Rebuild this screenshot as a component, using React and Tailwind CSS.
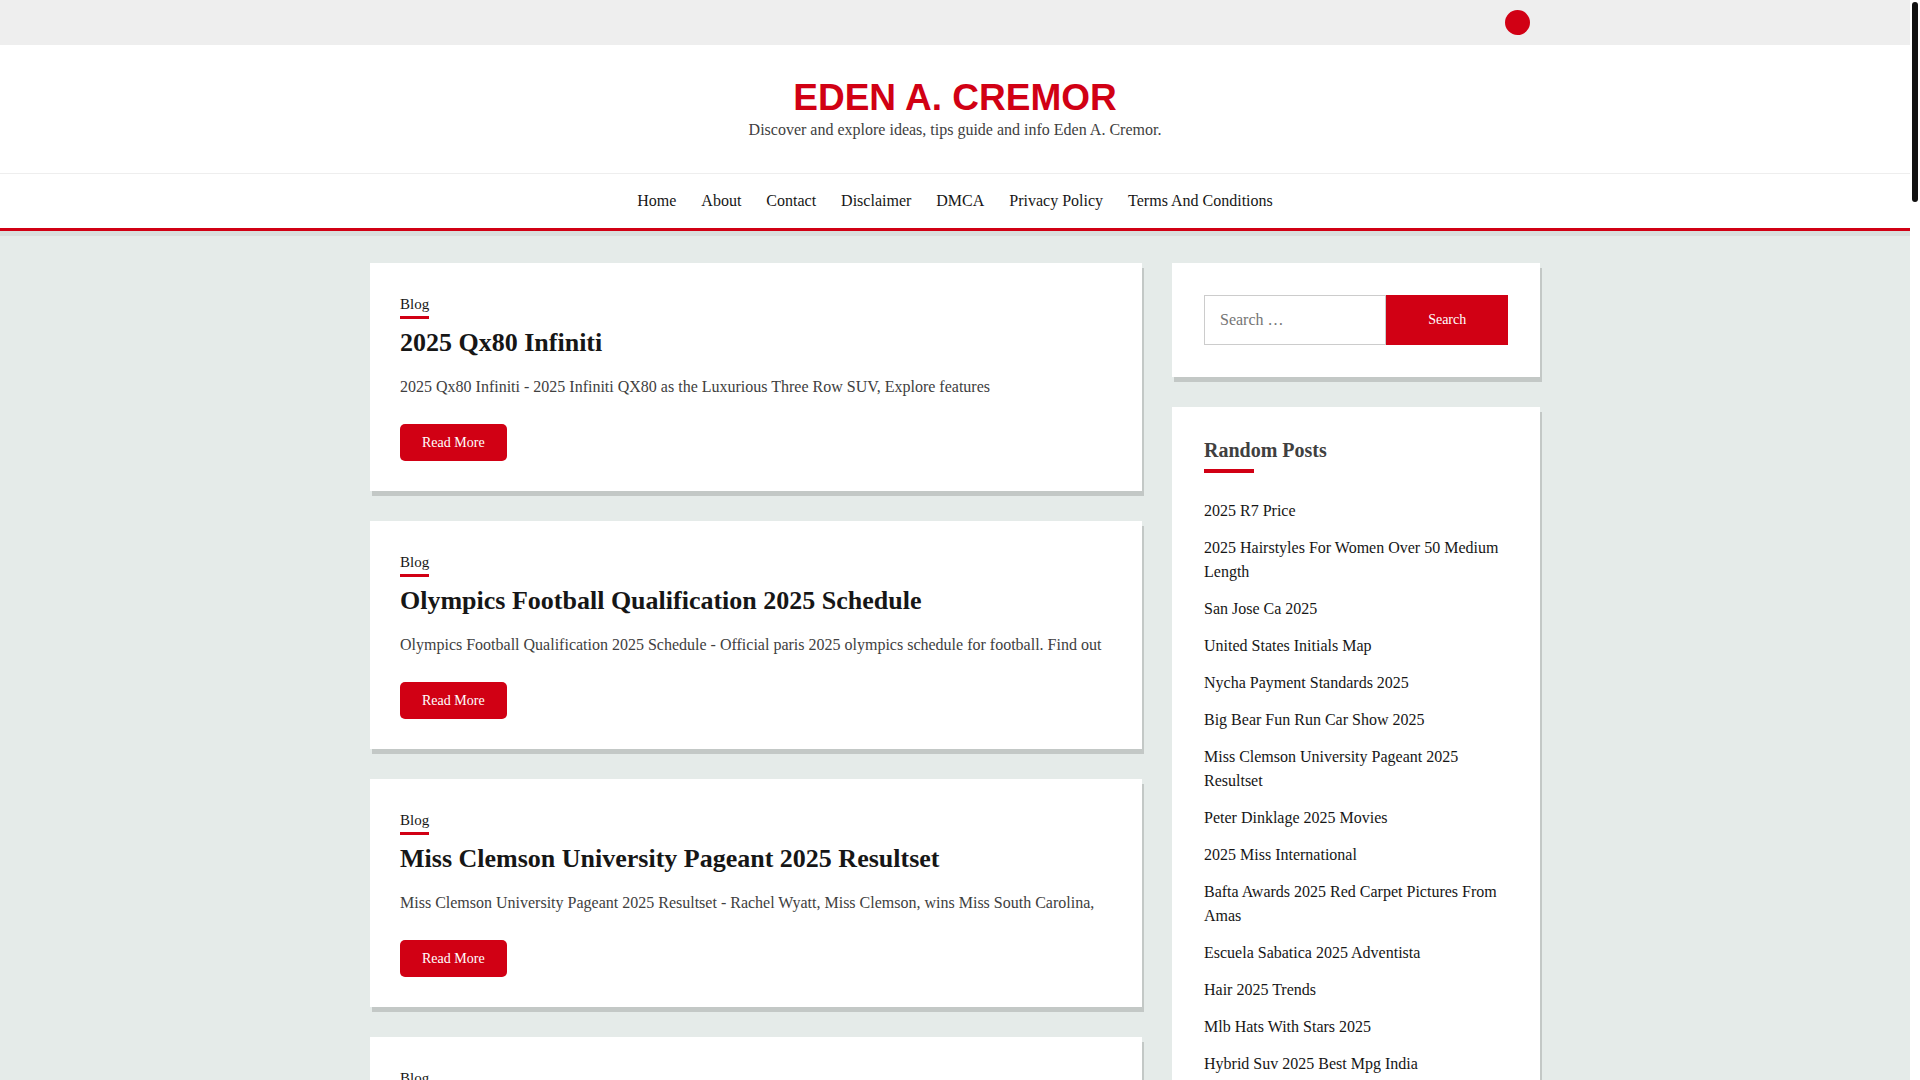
import React, { useState } from 'react';

const menu = ['Home', 'About', 'Contact', 'Disclaimer', 'DMCA', 'Privacy Policy', 'Terms And Conditions'];

const posts = [
    {
        id: 1,
        category: 'Blog',
        title: '2025 Qx80 Infiniti',
        excerpt: '2025 Qx80 Infiniti - 2025 Infiniti QX80 as the Luxurious Three Row SUV, Explore features',
    },
    {
        id: 2,
        category: 'Blog',
        title: 'Olympics Football Qualification 2025 Schedule',
        excerpt: 'Olympics Football Qualification 2025 Schedule - Official paris 2025 olympics schedule for football. Find out',
    },
    {
        id: 3,
        category: 'Blog',
        title: 'Miss Clemson University Pageant 2025 Resultset',
        excerpt: 'Miss Clemson University Pageant 2025 Resultset - Rachel Wyatt, Miss Clemson, wins Miss South Carolina,',
    },
    { id: 4, category: 'Blog' },
];

const randomPosts = [
    '2025 R7 Price',
    '2025 Hairstyles For Women Over 50 Medium Length',
    'San Jose Ca 2025',
    'United States Initials Map',
    'Nycha Payment Standards 2025',
    'Big Bear Fun Run Car Show 2025',
    'Miss Clemson University Pageant 2025 Resultset',
    'Peter Dinklage 2025 Movies',
    '2025 Miss International',
    'Bafta Awards 2025 Red Carpet Pictures From Amas',
    'Escuela Sabatica 2025 Adventista',
    'Hair 2025 Trends',
    'Mlb Hats With Stars 2025',
    'Hybrid Suv 2025 Best Mpg India',
];

function Header() {
    return (
        <header className="bg-white border-b-3 border-[#d10014] shadow-[0_5px_0_rgba(0,0,0,0.05)]">
            <div className="bg-[#eeeeee]">
                <div className="max-w-[1170px] mx-auto py-[10px] px-[10px] flex justify-end">
                    <a href="#" aria-label="Social" className="w-[25px] h-[25px] rounded-full bg-[#d10014]"></a>
                </div>
            </div>
            <div className="pt-[33px] pb-[31px] text-center border-b border-[#eeeeee]">
                <h1 className="font-['Liberation_Sans',sans-serif] text-[37px] leading-10 font-bold uppercase">
                    <a href="#" className="text-[#d10014]">Eden A. Cremor</a>
                </h1>
                <p>Discover and explore ideas, tips guide and info Eden A. Cremor.</p>
            </div>
            <nav className="py-[15px]">
                <ul className="flex flex-wrap justify-center gap-x-[25px]">
                    {menu.map((item) => (
                        <li key={item}>
                            <a href="#" className="text-[#161616]">{item}</a>
                        </li>
                    ))}
                </ul>
            </nav>
        </header>
    );
}

function PostCard({ post }) {
    return (
        <article className="bg-white p-[30px] shadow-[2px_5px_0_rgba(0,0,0,0.15)]">
            <div className="flex">
                <a href="#" className="text-[15px] leading-[23px] text-[#161616] border-b-3 border-[#d10014]">
                    {post.category}
                </a>
            </div>
            {post.title && (
                <>
                    <h2 className="mt-1 text-[26px] leading-[39px] font-bold">
                        <a href="#" className="text-[#161616]">{post.title}</a>
                    </h2>
                    <p className="mt-[13px]">{post.excerpt}</p>
                    <div className="mt-[25px] flex">
                        <a href="#" className="bg-[#d10014] text-white text-sm leading-[21px] px-[22px] py-2 rounded-[5px]">
                            Read More
                        </a>
                    </div>
                </>
            )}
        </article>
    );
}

function SearchWidget() {
    const [query, setQuery] = useState('');

    return (
        <section className="bg-white p-8 shadow-[2px_5px_0_rgba(0,0,0,0.15)]">
            <form className="flex" onSubmit={(e) => e.preventDefault()}>
                <input
                    type="search"
                    aria-label="Search for"
                    placeholder="Search …"
                    value={query}
                    onChange={(e) => setQuery(e.target.value)}
                    className="w-3/5 h-[50px] px-[15px] border border-[#cccccc] text-[#404040] placeholder:text-[#757575]"
                />
                <button type="submit" className="w-2/5 bg-[#d10014] text-white text-sm">Search</button>
            </form>
        </section>
    );
}

function RandomPosts() {
    return (
        <section className="bg-white p-8 shadow-[2px_5px_0_rgba(0,0,0,0.15)]">
            <h2 className="text-xl leading-[22px] font-bold">Random Posts</h2>
            <div className="mt-2 w-[50px] h-1 bg-[#d10014]"></div>
            <ul className="mt-[26px] flex flex-col gap-[13px]">
                {randomPosts.map((title) => (
                    <li key={title}>
                        <a href="#" className="text-[#161616]">{title}</a>
                    </li>
                ))}
            </ul>
        </section>
    );
}

function App() {
    return (
        <div className="flex h-screen overflow-hidden bg-white font-['Liberation_Serif',serif] text-base text-[#404040]">
            <div className="flex-1 overflow-y-auto [scrollbar-width:none] bg-[#e5ebe9]">
                <Header />
                <div className="max-w-[1170px] mx-auto py-8 flex items-start gap-[30px]">
                    <main className="flex-1 flex flex-col gap-[30px]">
                        {posts.map((post) => (
                            <PostCard key={post.id} post={post} />
                        ))}
                    </main>
                    <aside className="w-[368px] flex flex-col gap-[30px]">
                        <SearchWidget />
                        <RandomPosts />
                    </aside>
                </div>
            </div>
            {/* scroll rail */}
            <div className="w-[10px] p-[2px]">
                <div className="h-[200px] rounded-full bg-[#111111]"></div>
            </div>
        </div>
    );
}

export default App;
